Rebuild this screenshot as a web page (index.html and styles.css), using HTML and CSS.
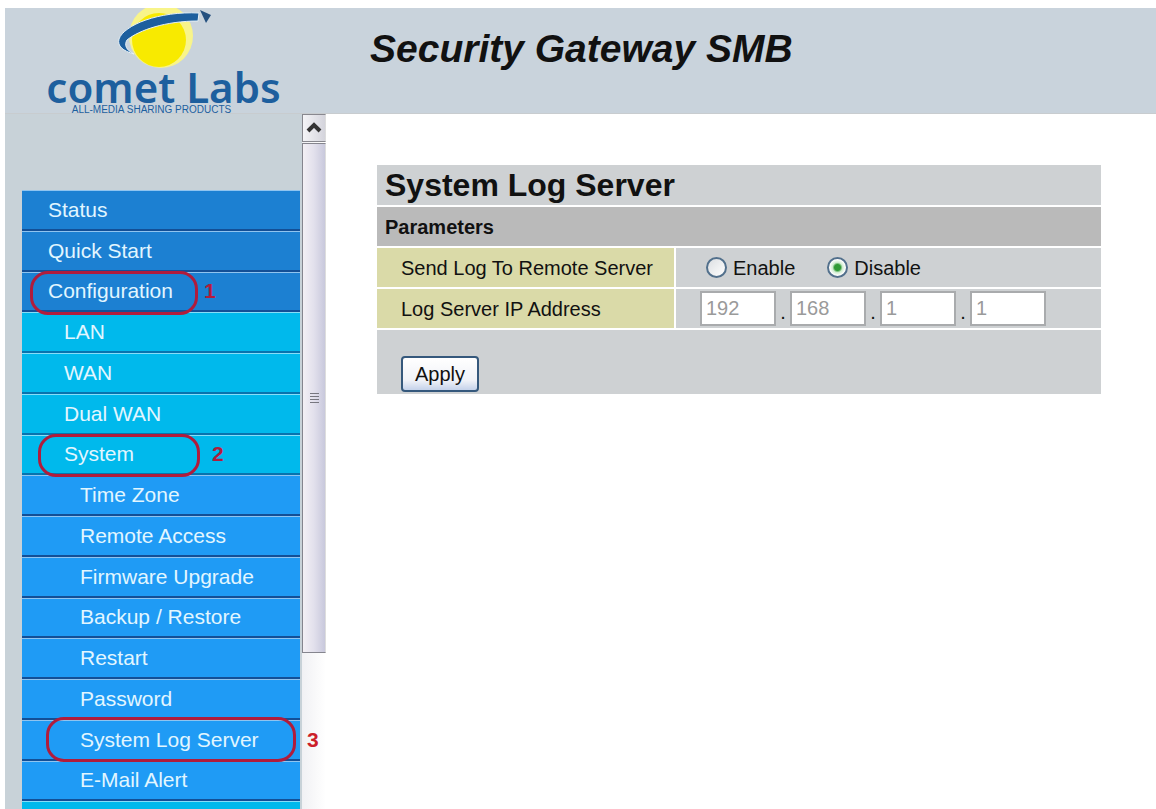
FILE: index.html
```html
<!DOCTYPE html>
<html lang="en">
    <head>
        <meta charset="UTF-8" />
        <meta name="viewport" content="width=device-width, initial-scale=1.0" />
        <title>Security Gateway SMB</title>
        <link rel="stylesheet" href="styles.css">
    </head>
    <body>
        <header class="header">
            <a class="logo" href="#">
                <svg class="planet" viewBox="0 0 100 62" aria-hidden="true">
                    <circle cx="47" cy="28" r="32" fill="#f8f48a" />
                    <circle cx="45" cy="32" r="27" fill="#f8ea00" />
                    <path d="M20 46C9 43 3 38 5 31C10 17 45 3 85 5L84 13C52 13 25 22 13 32C10 37 12 42 20 46Z" fill="#1d5f9e" stroke="#e6f1f7" stroke-width="1" />
                    <path d="M86 2L97 7L92 15Z" fill="#24507f" />
                </svg>
                <span class="logo-name">comet Labs</span>
                <span class="tagline">ALL-MEDIA SHARING PRODUCTS</span>
            </a>
            <h1>Security Gateway SMB</h1>
        </header>

        <div class="page">
            <nav class="sidebar">
                <ul class="menu">
                    <li><a href="#">Status</a></li>
                    <li><a href="#">Quick Start</a></li>
                    <li>
                        <a href="#">Configuration</a>
                        <span class="ring ring-1"></span>
                        <b class="step step-1">1</b>
                    </li>
                    <li class="sub"><a href="#">LAN</a></li>
                    <li class="sub"><a href="#">WAN</a></li>
                    <li class="sub"><a href="#">Dual WAN</a></li>
                    <li class="sub">
                        <a href="#">System</a>
                        <span class="ring ring-2"></span>
                        <b class="step step-2">2</b>
                    </li>
                    <li class="item"><a href="#">Time Zone</a></li>
                    <li class="item"><a href="#">Remote Access</a></li>
                    <li class="item"><a href="#">Firmware Upgrade</a></li>
                    <li class="item"><a href="#">Backup / Restore</a></li>
                    <li class="item"><a href="#">Restart</a></li>
                    <li class="item"><a href="#">Password</a></li>
                    <li class="item">
                        <a href="#">System Log Server</a>
                        <span class="ring ring-3"></span>
                        <b class="step step-3">3</b>
                    </li>
                    <li class="item"><a href="#">E-Mail Alert</a></li>
                    <li class="sub"></li>
                </ul>
            </nav>

            <!-- menu scrollbar -->
            <div class="scrollbar">
                <button class="scroll-up" type="button" aria-label="Scroll up">
                    <svg width="16" height="12" viewBox="0 0 16 12"><path d="M2 10L8 4L14 10" fill="none" stroke="#333" stroke-width="4" /></svg>
                </button>
                <div class="thumb"><span class="grip"></span></div>
            </div>

            <main class="content">
                <form>
                    <table class="params">
                        <tr class="title"><th colspan="2"><h2>System Log Server</h2></th></tr>
                        <tr class="section"><th colspan="2">Parameters</th></tr>
                        <tr>
                            <th class="label">Send Log To Remote Server</th>
                            <td>
                                <div class="radios">
                                    <label><input type="radio" name="remote" />Enable</label>
                                    <label><input type="radio" name="remote" checked />Disable</label>
                                </div>
                            </td>
                        </tr>
                        <tr>
                            <th class="label"><label for="ip1">Log Server IP Address</label></th>
                            <td>
                                <div class="ip">
                                    <input id="ip1" type="text" value="192" disabled /><span>.</span>
                                    <input type="text" value="168" aria-label="IP part 2" disabled /><span>.</span>
                                    <input type="text" value="1" aria-label="IP part 3" disabled /><span>.</span>
                                    <input type="text" value="1" aria-label="IP part 4" disabled />
                                </div>
                            </td>
                        </tr>
                        <tr class="actions"><td colspan="2"><button class="apply" type="button">Apply</button></td></tr>
                    </table>
                </form>
            </main>
        </div>
    </body>
</html>
```
FILE: styles.css
```css
* {
    box-sizing: border-box;
    margin: 0;
    padding: 0;
}

html {
    height: 100%;
    overflow: hidden;
}

body {
    display: flex;
    flex-direction: column;
    height: 100%;
    padding: 8px 0 0 5px;
    background: #fff;
    color: #111;
    font: 20px/24px "Liberation Sans", Arial, sans-serif;
}

ul {
    list-style: none;
}

a {
    color: inherit;
    text-decoration: none;
}

/* header */
.header {
    display: flex;
    flex: none;
    height: 106px;
    background: #c9d3dc;
    border-bottom: 1px solid #c8cccf;
}

.logo {
    display: flex;
    flex-direction: column;
    align-items: center;
    width: 317px;
    color: #1d5f9e;
}

.planet {
    flex: none;
    width: 100px;
    height: 62px;
}

.logo-name {
    font: 42px/34px "Noto Sans", sans-serif;
    font-weight: 600;
}

.tagline {
    padding-right: 24px;
    font-size: 10px;
    line-height: 12px;
}

.header h1 {
    padding: 21px 0 0 48px;
    font-size: 39px;
    line-height: 40px;
    font-style: italic;
}

.page {
    display: flex;
    flex: 1;
    min-height: 0;
}

/* left menu */
.sidebar {
    flex: none;
    width: 297px;
    padding: 76px 2px 0 17px;
    background: #c8d2d8;
}

.menu {
    display: grid;
    grid-auto-rows: 1fr;
    height: 652px;
    font-size: 21px;
}

.menu li {
    position: relative;
    display: flex;
    align-items: center;
    padding-left: 26px;
    background: #1c80d2;
    border-top: 1px solid #8fc4f0;
    border-bottom: 2px solid #134f96;
    color: #e2f6ff;
}

.menu .sub {
    padding-left: 42px;
    background: #00b9ec;
    border-top-color: #86def8;
    border-bottom-color: #0873ae;
}

.menu .item {
    padding-left: 58px;
    background: #1f9bf5;
}

/* numbered marks over the menu */
.ring {
    position: absolute;
    z-index: 1;
    border: 3px solid #b01c3c;
    border-radius: 18px;
}

.ring-1 {
    left: 8px;
    top: -2px;
    width: 168px;
    height: 44px;
}

.ring-2 {
    left: 16px;
    top: -2px;
    width: 162px;
    height: 43px;
}

.ring-3 {
    left: 24px;
    top: -4px;
    width: 250px;
    height: 45px;
}

.step {
    position: absolute;
    z-index: 1;
    color: #b01c3c;
}

.step-1 {
    left: 182px;
}

.step-2 {
    left: 190px;
}

.step-3 {
    left: 285px;
    color: #cc1f2a;
}

/* scrollbar */
.scrollbar {
    display: flex;
    flex: none;
    flex-direction: column;
    width: 24px;
    background: linear-gradient(to right, #f1f1f4, #fff);
}

.scroll-up {
    height: 28px;
    background: linear-gradient(to right, #f4f4f7, #d4d4dc);
    border: 1px solid #88888f;
    border-right-color: #ddd;
}

.thumb {
    display: flex;
    align-items: center;
    justify-content: center;
    height: 510px;
    margin-top: 1px;
    background: linear-gradient(to right, #f3f0f5, #e2e0ec 50%, #c8c8dc);
    border: 1px solid #85858e;
    border-right-color: #ddd;
}

.grip {
    width: 9px;
    height: 10px;
    background: repeating-linear-gradient(#77777f 0 1px, transparent 1px 3px);
}

/* settings table */
.content {
    flex: 1;
    padding: 51px 55px 0 51px;
}

.params {
    width: 100%;
    border-collapse: collapse;
}

.params th {
    text-align: left;
}

.params td,
.params th {
    height: 41px;
    background: #ced1d3;
    border-bottom: 2px solid #fff;
}

.params h2 {
    font-size: 32px;
    line-height: 36px;
}

.params .title th,
.params .section th {
    padding-left: 8px;
}

.params .section th {
    background: #bababa;
}

.params .label {
    width: 298px;
    padding-left: 24px;
    background: #dadaa8;
    border-right: 2px solid #fff;
    font-weight: normal;
}

.params td {
    padding-left: 24px;
}

.radios {
    display: flex;
    gap: 32px;
    padding-left: 6px;
}

.radios label {
    display: flex;
    align-items: center;
    gap: 6px;
}

.radios input {
    appearance: none;
    width: 21px;
    height: 21px;
    background: linear-gradient(135deg, #dcdfe2, #fff);
    border: 2px solid #52708c;
    border-radius: 50%;
}

.radios input:checked {
    background: radial-gradient(circle, #2f9a35 0 3px, #cfeccf 5px, #fff 8px);
}

.ip {
    display: flex;
}

.ip input {
    width: 76px;
    height: 35px;
    padding: 0 4px;
    background: #fff;
    border: 2px solid #a9abad;
    color: #9a9a9a;
    font: inherit;
}

.ip span {
    width: 14px;
    padding-top: 9px;
    text-align: center;
}

.params .actions td {
    height: 65px;
    vertical-align: bottom;
    border: 0;
}

.apply {
    display: block;
    width: 78px;
    height: 36px;
    margin-bottom: 2px;
    background: linear-gradient(#fff, #f0f2f8 70%, #c5d2ea);
    border: 2px solid #35587c;
    border-radius: 4px;
    color: #111;
    font: inherit;
}
```
